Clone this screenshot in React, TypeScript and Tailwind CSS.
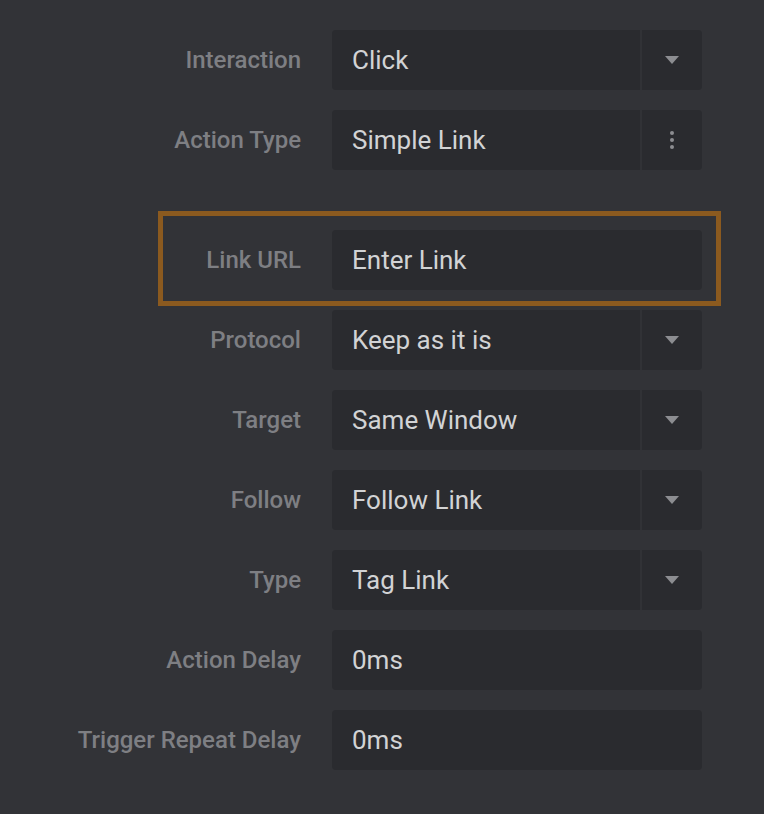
import React from "react";

type Row = { label: string; value: string; kind: "select" | "menu" | "input" };

const rows: Row[] = [
  { label: "Interaction", value: "Click", kind: "select" },
  { label: "Action Type", value: "Simple Link", kind: "menu" },
  { label: "Link URL", value: "Enter Link", kind: "input" },
  { label: "Protocol", value: "Keep as it is", kind: "select" },
  { label: "Target", value: "Same Window", kind: "select" },
  { label: "Follow", value: "Follow Link", kind: "select" },
  { label: "Type", value: "Tag Link", kind: "select" },
  { label: "Action Delay", value: "0ms", kind: "input" },
  { label: "Trigger Repeat Delay", value: "0ms", kind: "input" },
];

function Caret() {
  return (
    <svg width="16" height="10" viewBox="0 0 16 10">
      <polygon points="1,1 15,1 8,9" fill="#8c8d91" />
    </svg>
  );
}

function Kebab() {
  return (
    <div className="flex flex-col items-center gap-[3px]">
      <span className="block h-[4px] w-[4px] rounded-full bg-[#8c8d91]" />
      <span className="block h-[4px] w-[4px] rounded-full bg-[#8c8d91]" />
      <span className="block h-[4px] w-[4px] rounded-full bg-[#8c8d91]" />
    </div>
  );
}

function Field({ row }: { row: Row }) {
  if (row.kind === "input") {
    return (
      <div className="flex h-[60px] w-[370px] items-center rounded-[4px] bg-[#2a2b2f] pl-[20px] text-[26px] text-[#d2d3d5]">
        {row.value}
      </div>
    );
  }
  return (
    <div className="flex h-[60px] w-[370px] overflow-hidden rounded-[4px] bg-[#313236]">
      <div className="flex flex-1 items-center bg-[#2a2b2f] pl-[20px] text-[26px] text-[#d2d3d5]">{row.value}</div>
      <div className="ml-[2px] flex w-[60px] items-center justify-center bg-[#2a2b2f]">
        {row.kind === "select" ? <Caret /> : <Kebab />}
      </div>
    </div>
  );
}

function FieldRow({ row }: { row: Row }) {
  return (
    <div className="flex h-[60px] items-center">
      <div className="w-[302px] pr-[1px] text-right text-[24px] font-medium text-[#7e7f83]">{row.label}</div>
      <div className="ml-[30px]">
        <Field row={row} />
      </div>
    </div>
  );
}

export default function App() {
  return (
    <div
      className="flex h-[814px] w-[764px] flex-col bg-[#323337] pt-[30px]"
      style={{ fontFamily: "Roboto, 'Noto Sans', sans-serif" }}
    >
      <div className="flex flex-col gap-[20px]">
        <FieldRow row={rows[0]} />
        <FieldRow row={rows[1]} />
      </div>
      <div className="mt-[41px] ml-[158px] w-[563px] border-[5px] border-[#8b5a1f] pt-[14px] pb-[11px]">
        <div className="-ml-[163px]">
          <FieldRow row={rows[2]} />
        </div>
      </div>
      <div className="mt-[4px] flex flex-col gap-[20px]">
        {rows.slice(3).map((r) => (
          <FieldRow key={r.label} row={r} />
        ))}
      </div>
    </div>
  );
}
